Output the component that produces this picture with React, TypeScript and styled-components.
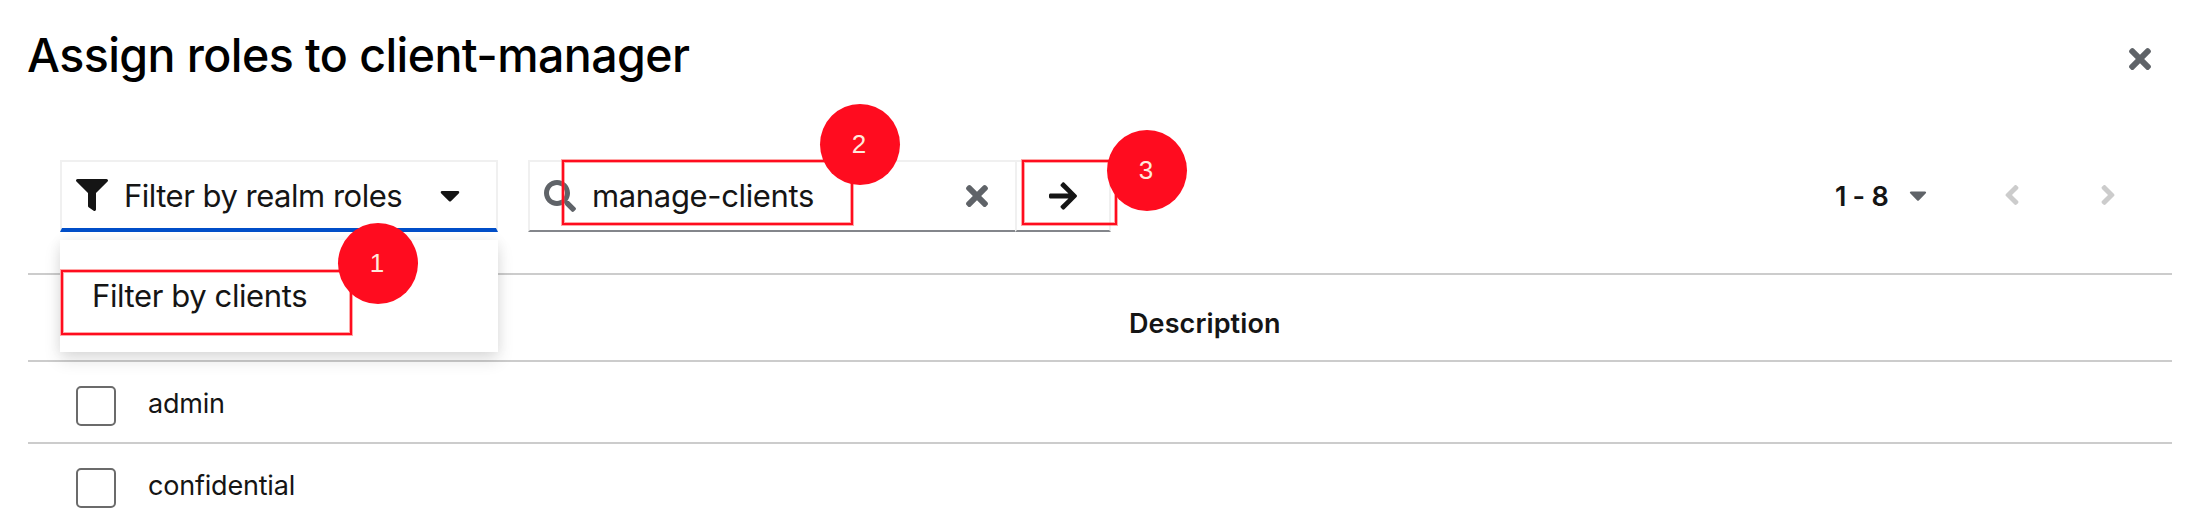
import React from 'react';
import styled, { createGlobalStyle } from 'styled-components';
import { FaAngleLeft, FaAngleRight, FaArrowRight, FaCaretDown, FaFilter, FaSearch, FaTimes } from 'react-icons/fa';

const GlobalStyle = createGlobalStyle`
  *, *::before, *::after { box-sizing: border-box; }
  body { margin: 0; background: #fff; color: #151515; font-family: Inter, "Liberation Sans", sans-serif; }
  svg { display: block; flex: none; }
`;

const Dialog = styled.main`
  position: relative;
  width: 2200px;
  height: 518px;
  overflow: hidden;
  padding: 0 28px;
  background: #fff;
`;

const Header = styled.header`
  display: flex;
  justify-content: space-between;
  height: 160px;
`;

const Title = styled.h1`
  margin: 27px 0 0 -1px;
  font-size: 46.5px;
  font-weight: 500;
  line-height: 56px;
  letter-spacing: -0.57px;
  color: #000;
`;

const IconButton = styled.button<{ $color?: string }>`
  display: flex;
  align-items: center;
  justify-content: center;
  padding: 0;
  border: 0;
  background: none;
  color: ${p => p.$color ?? '#5f6368'};
`;

const CloseButton = styled(IconButton)`
  height: 32px;
  margin: 43px 21px 0 0;
`;

const Toolbar = styled.div`
  display: flex;
  height: 113px;
  padding: 0 56px 0 32px;
`;

const FilterSelect = styled.div`
  position: relative;
  width: 438px;
  margin-right: 30px;
`;

const SelectToggle = styled.button`
  display: flex;
  align-items: center;
  width: 100%;
  height: 72px;
  padding: 0 0 0 14px;
  border: 2px solid #f0f0f0;
  border-bottom: 4px solid #004ec8;
  background: #fff;
  color: #151515;
  font: inherit;
`;

const ControlText = styled.span<{ $spacing: number }>`
  font-size: 31px;
  line-height: 40px;
  letter-spacing: ${p => p.$spacing}px;
  white-space: nowrap;
`;

const SelectLabel = styled(ControlText)`
  width: 332px;
  padding: 1px 0 0 16px;
  text-align: left;
`;

const Menu = styled.ul`
  position: absolute;
  z-index: 1;
  top: 80px;
  left: 0;
  width: 438px;
  height: 112px;
  margin: 0;
  padding: 36px 32px;
  list-style: none;
  background: #fff;
  box-shadow: 0 8px 16px rgba(3, 3, 3, 0.12), 0 0 12px rgba(3, 3, 3, 0.06);
`;

const SearchGroup = styled.div`
  display: flex;
  height: 72px;
`;

const SearchField = styled.div`
  display: flex;
  align-items: center;
  width: 487px;
  padding: 0 27px 0 14px;
  border: solid #f0f0f0;
  border-width: 2px 0 2px 2px;
  border-bottom-color: #83868b;
  color: #5f6368;
`;

const SearchValue = styled(ControlText)`
  flex: 1;
  padding: 0 0 0 16px;
  color: #151515;
`;

const SearchButton = styled(IconButton)`
  width: 96px;
  padding-right: 1px;
  border: 2px solid #f0f0f0;
  border-bottom-color: #83868b;
`;

const Pagination = styled.nav`
  display: flex;
  align-items: center;
  height: 70px;
  margin-left: auto;
`;

const PageRange = styled.span`
  width: 74px;
  padding-top: 2px;
  font-size: 27px;
  font-weight: 600;
  letter-spacing: -0.3px;
  white-space: pre;
`;

const PageArrow = styled(IconButton)`
  width: 16px;
  margin-left: 77px;

  & + & { margin-left: 80px; }
`;

const HeadRow = styled.div`
  height: 89px;
  padding: 33px 0 0 1101px;
  border: solid #ccc;
  border-width: 2px 0;
  font-size: 27px;
  font-weight: 600;
  line-height: 32px;
  letter-spacing: 0.1px;
`;

const Row = styled.label`
  display: flex;
  height: 82px;
  padding: 24px 0 0 48px;
  border-bottom: 2px solid #ccc;
`;

const Checkbox = styled.input`
  appearance: none;
  width: 40px;
  height: 40px;
  margin: 0 32px 0 0;
  border: 2px solid #6b6b6b;
  border-radius: 5px;
  background: #fff;
`;

const RoleName = styled.span`
  margin-top: 1px;
  font-size: 27px;
  line-height: 34px;
  letter-spacing: -0.2px;
`;

const Outline = styled.div<{ $x: number; $y: number; $w: number; $h: number }>`
  position: absolute;
  z-index: 2;
  left: ${p => p.$x}px;
  top: ${p => p.$y}px;
  width: ${p => p.$w}px;
  height: ${p => p.$h}px;
  border: 2px solid #ff0c1f;
  box-shadow: 0 0 0 1px rgba(255, 60, 60, 0.45), inset 0 0 0 1px rgba(255, 60, 60, 0.45);
`;

const Marker = styled.div<{ $x: number; $y: number }>`
  position: absolute;
  z-index: 3;
  left: ${p => p.$x}px;
  top: ${p => p.$y}px;
  display: flex;
  align-items: center;
  justify-content: center;
  width: 80px;
  height: 81px;
  padding-right: 2px;
  padding-bottom: 1px;
  border-radius: 50%;
  background: #ff0c1f;
  color: #ffe9dc;
  font: 26px "Liberation Sans", sans-serif;
`;

const roles = ['admin', 'confidential'];

export default function App() {
  return (
    <Dialog>
      <GlobalStyle />
      <Header>
        <Title>Assign roles to client-manager</Title>
        <CloseButton aria-label="Close"><FaTimes size={32} style={{ width: 22 }} /></CloseButton>
      </Header>
      <Toolbar>
        <FilterSelect>
          <SelectToggle>
            <FaFilter size={32} />
            <SelectLabel $spacing={-0.5}>Filter by realm roles</SelectLabel>
            <FaCaretDown size={32} style={{ width: 20 }} />
          </SelectToggle>
          <Menu>
            <li><ControlText $spacing={-0.4}>Filter by clients</ControlText></li>
          </Menu>
        </FilterSelect>
        <SearchGroup>
          <SearchField>
            <FaSearch size={32} />
            <SearchValue $spacing={-0.35}>manage-clients</SearchValue>
            <FaTimes size={32} style={{ width: 22 }} />
          </SearchField>
          <SearchButton $color="#151515" aria-label="Search"><FaArrowRight size={32} style={{ width: 28 }} /></SearchButton>
        </SearchGroup>
        <Pagination>
          <PageRange>1 - 8</PageRange>
          <FaCaretDown size={28} color="#5f6368" style={{ width: 18 }} />
          <PageArrow $color="#ccc" aria-label="Previous"><FaAngleLeft size={32} style={{ width: 20 }} /></PageArrow>
          <PageArrow $color="#ccc" aria-label="Next"><FaAngleRight size={32} style={{ width: 20 }} /></PageArrow>
        </Pagination>
      </Toolbar>
      <HeadRow>Description</HeadRow>
      {roles.map(role => (
        <Row key={role}>
          <Checkbox type="checkbox" />
          <RoleName>{role}</RoleName>
        </Row>
      ))}
      <Outline $x={61} $y={270} $w={291} $h={65} />
      <Outline $x={562} $y={160} $w={291} $h={65} />
      <Outline $x={1022} $y={160} $w={95} $h={65} />
      <Marker $x={338} $y={223}>1</Marker>
      <Marker $x={820} $y={104}>2</Marker>
      <Marker $x={1107} $y={130}>3</Marker>
    </Dialog>
  );
}
